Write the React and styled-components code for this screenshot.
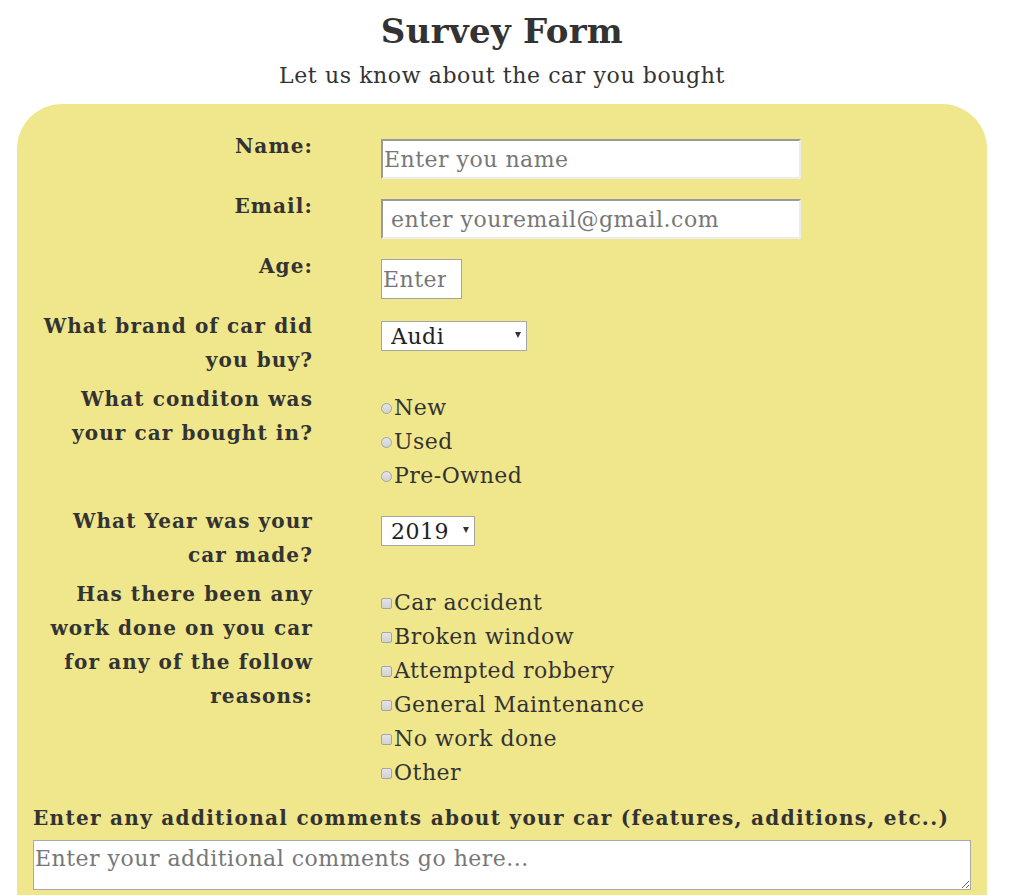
import React from "react";
import styled, { createGlobalStyle } from "styled-components";

const GlobalStyle = createGlobalStyle`
  body {
    margin: 0;
    background: #fff;
    color: #333;
    font-family: "DejaVu Serif", "Liberation Serif", serif;
  }
`;

const Page = styled.div`
  width: 970px;
  margin-left: 17px;
`;

const Header = styled.header`
  text-align: center;
`;

const Title = styled.h1`
  margin: 0;
  padding-top: 12px;
  font-size: 34px;
  line-height: 38px;
  font-weight: bold;
  letter-spacing: 0.3px;
`;

const Subtitle = styled.p`
  margin: 13px 0 15px;
  font-size: 22px;
  line-height: 26px;
  letter-spacing: 0.6px;
`;

const Card = styled.form`
  background: #f0e68c;
  border-radius: 45px;
  padding: 25px 16px 60px;
`;

const Row = styled.div`
  display: flex;
  align-items: flex-start;
  margin-bottom: 5px;
`;

const Label = styled.label`
  width: 280px;
  flex-shrink: 0;
  text-align: right;
  font-size: 20px;
  line-height: 34px;
  font-weight: bold;
  letter-spacing: 1.1px;
`;

const Controls = styled.div`
  margin-left: 68px;
  padding-top: ${(p) => p.$top || 0}px;
  padding-bottom: ${(p) => p.$bottom || 0}px;
`;

const TextInput = styled.input`
  box-sizing: border-box;
  display: block;
  width: ${(p) => p.$width}px;
  height: 40px;
  margin-bottom: 5px;
  padding: 0 ${(p) => p.$padRight ?? 1}px 0 ${(p) => p.$pad || 1}px;
  background: #fff;
  border-style: solid;
  border-width: ${(p) => (p.$flat ? 1 : 2)}px;
  border-color: ${(p) => (p.$flat ? "#a3a3a3" : "#9a9a9a #ececec #ececec #9a9a9a")};
  font-family: inherit;
  font-size: 22px;
  letter-spacing: 0.5px;
  color: #333;
  outline: none;
  &::placeholder {
    color: #777;
  }
`;

const SelectWrap = styled.div`
  position: relative;
  width: ${(p) => p.$width}px;
`;

const Select = styled.select`
  appearance: none;
  box-sizing: border-box;
  display: block;
  width: 100%;
  height: 30px;
  padding: 0 0 0 9px;
  border: 1px solid #a6a6a6;
  border-radius: 0;
  background: #fff;
  font-family: inherit;
  font-size: 22px;
  letter-spacing: 0.5px;
  color: #222;
`;

const Arrow = styled.span`
  position: absolute;
  right: 6px;
  top: 11px;
  width: 0;
  height: 0;
  border-left: 3px solid transparent;
  border-right: 3px solid transparent;
  border-top: 6px solid #333;
  pointer-events: none;
`;

const Option = styled.label`
  display: flex;
  align-items: center;
  font-size: 22px;
  line-height: 34px;
  letter-spacing: 0.5px;
`;

const Radio = styled.input.attrs({ type: "radio" })`
  appearance: none;
  box-sizing: border-box;
  flex-shrink: 0;
  width: 11px;
  height: 11px;
  margin: 0 2px 0 0;
  border: 1px solid #a5a5a5;
  border-radius: 50%;
  background: linear-gradient(#e4e4e4, #d2d2d2);
`;

const Check = styled(Radio).attrs({ type: "checkbox" })`
  border-radius: 2px;
`;

const CommentsLabel = styled.label`
  display: block;
  font-size: 20px;
  line-height: 34px;
  font-weight: bold;
  letter-spacing: 1.3px;
  margin-top: 5px;
`;

const TextArea = styled.textarea`
  box-sizing: border-box;
  display: block;
  width: 938px;
  height: 50px;
  margin-top: 5px;
  padding: 5px 1px 2px;
  border: 1px solid #a9a9a9;
  background: #fff;
  font-family: inherit;
  font-size: 22px;
  letter-spacing: 0.5px;
  color: #333;
  &::placeholder {
    color: #777;
  }
`;

const conditions = ["New", "Used", "Pre-Owned"];
const reasons = [
  "Car accident",
  "Broken window",
  "Attempted robbery",
  "General Maintenance",
  "No work done",
  "Other",
];

const App = () => {
  return (
    <>
      <GlobalStyle />
      <Page>
        <Header>
          <Title>Survey Form</Title>
          <Subtitle>Let us know about the car you bought</Subtitle>
        </Header>
        <Card onSubmit={(e) => e.preventDefault()}>
          <Row>
            <Label htmlFor="name">Name:</Label>
            <Controls $top={10}>
              <TextInput id="name" $width={420} placeholder="Enter you name" />
            </Controls>
          </Row>
          <Row>
            <Label htmlFor="email">Email:</Label>
            <Controls $top={10}>
              <TextInput id="email" $width={420} $pad={8} placeholder="enter youremail@gmail.com" />
            </Controls>
          </Row>
          <Row>
            <Label htmlFor="age">Age:</Label>
            <Controls $top={10}>
              <TextInput id="age" $width={81} $padRight={15} $flat placeholder="Enter age" />
            </Controls>
          </Row>
          <Row>
            <Label htmlFor="brand">
              What brand of car did
              <br />
              you buy?
            </Label>
            <Controls $top={12}>
              <SelectWrap $width={146}>
                <Select id="brand" defaultValue="Audi">
                  <option>Audi</option>
                  <option>BMW</option>
                  <option>Ford</option>
                  <option>Toyota</option>
                </Select>
                <Arrow />
              </SelectWrap>
            </Controls>
          </Row>
          <Row>
            <Label>
              What conditon was
              <br />
              your car bought in?
            </Label>
            <Controls $top={9} $bottom={6}>
              {conditions.map((c) => (
                <Option key={c}>
                  <Radio name="condition" value={c} />
                  {c}
                </Option>
              ))}
            </Controls>
          </Row>
          <Row>
            <Label htmlFor="year">
              What Year was your
              <br />
              car made?
            </Label>
            <Controls $top={12}>
              <SelectWrap $width={94}>
                <Select id="year" defaultValue="2019">
                  <option>2019</option>
                  <option>2018</option>
                  <option>2017</option>
                </Select>
                <Arrow />
              </SelectWrap>
            </Controls>
          </Row>
          <Row>
            <Label>
              Has there been any
              <br />
              work done on you car
              <br />
              for any of the follow
              <br />
              reasons:
            </Label>
            <Controls $top={9} $bottom={6}>
              {reasons.map((r) => (
                <Option key={r}>
                  <Check value={r} />
                  {r}
                </Option>
              ))}
            </Controls>
          </Row>
          <CommentsLabel htmlFor="comments">
            Enter any additional comments about your car (features, additions, etc..)
          </CommentsLabel>
          <TextArea id="comments" placeholder="Enter your additional comments go here..." />
        </Card>
      </Page>
    </>
  );
};

export default App;
